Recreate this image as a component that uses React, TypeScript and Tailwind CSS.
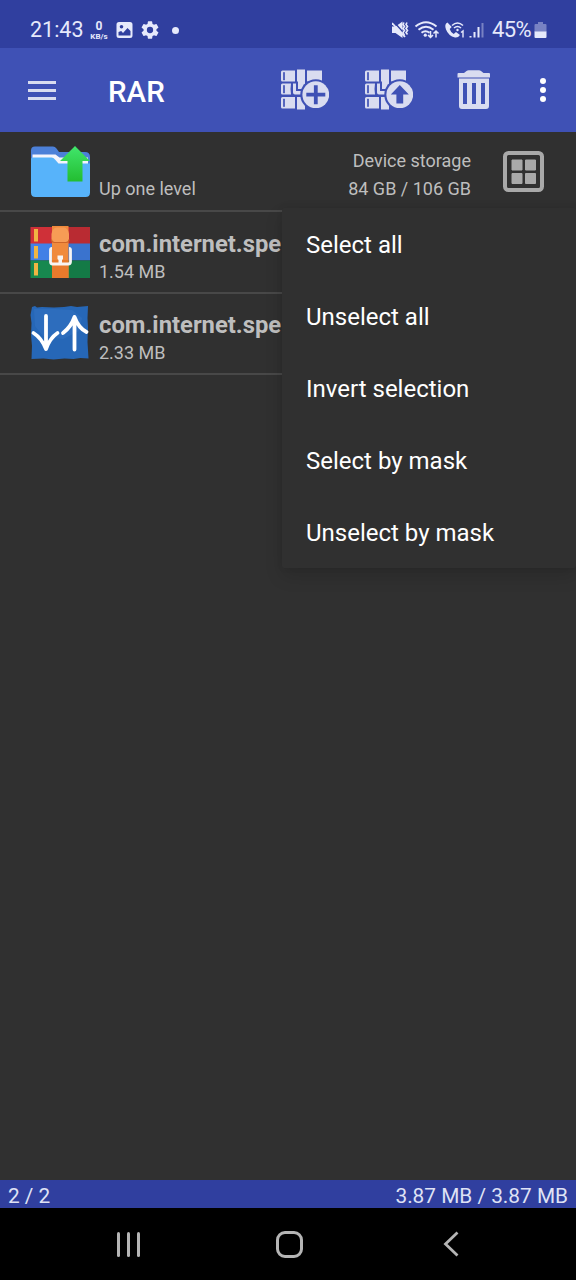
import type { ReactNode } from 'react'

const files = [
  { name: 'com.internet.spe', size: '1.54 MB', icon: <ArchiveIcon />, row: 'h-[82px]', iconTop: 'pt-[13px]', textTop: 'pt-[18px]' },
  { name: 'com.internet.spe', size: '2.33 MB', icon: <SpeedIcon />, row: 'h-[81px]', iconTop: 'pt-[11px]', textTop: 'pt-[17px]' },
]

const menuItems = ['Select all', 'Unselect all', 'Invert selection', 'Select by mask', 'Unselect by mask']

function ArchiveIcon() {
  return (
    <svg width="60" height="54" viewBox="0 0 60 54">
      <rect x="0.5" y="2" width="59.5" height="17" fill="#cf3038" />
      <rect x="0.5" y="18.500" width="59.5" height="17" fill="#4180e6" />
      <rect x="0.5" y="35.500" width="59.5" height="17.500" fill="#17884f" />
      <path d="M38.500 2H60v51H38.500z" fill="#000" opacity=".1" />
      <path d="M4 4h4v12.500H4zM4 21h4v12.500H4zM4 38h4v12.500H4z" fill="#f0b543" />
      <rect x="22" y="1" width="16.500" height="52" fill="#f08a3c" />
      <path d="M22 35h16.500v18H22z" fill="#e87a2c" />
      <path d="M21.500 9q1-6 5-6.500h7.500q4 .5 5 6.500v5q0 3-3 3H24.500q-3 0-3-3z" fill="#f79c55" />
      <path d="M21.500 14.500q0 3 3 3h11.500q3 0 3-3" fill="none" stroke="#cd6528" strokeWidth="1.200" />
      <path d="M22 23.300q-1.500 0-1.500 1.500v12q0 2.200 2.200 2.200h15.600q2.200 0 2.200-2.200v-12q0-1.500-1.500-1.500" fill="none" stroke="#f7f4f2" strokeWidth="2.800" />
      <path d="M27.500 30.500h5.500V34l-1 1v4h-3.500v-4l-1-1z" fill="#f7f4f2" />
    </svg>
  )
}

function SpeedIcon() {
  return (
    <svg width="60" height="56" viewBox="0 0 60 56">
      <path
        d="M2 2l3-1 2 1.500 5-.5 12 .5 10-.5 7-1 6 1 11-1-.5 12 .5 10-.5 14 1 16.500-8-.5-7 1-9-.5-11 1-10-1-12 .5.500-13-1-11 .5-12-1-8z"
        fill="#2667b7"
      />
      <path d="M4 4h20l18 1 10 8-3 13-16 8-20-3L5 21z" fill="#3977c5" opacity=".4" />
      <path d="M16 11v33M3.500 28q8 5 12.500 16 4-11 11.500-16M44.500 44.500V12M33 28q8-6 11.500-16 4 11 12 15" fill="none" stroke="#fff" strokeWidth="3.800" strokeLinecap="round" strokeLinejoin="round" />
    </svg>
  )
}

function FolderIcon() {
  return (
    <svg width="60" height="52" viewBox="0 0 60 52">
      <defs>
        <linearGradient id="up" x1="0" y1="0" x2="0" y2="1">
          <stop offset="0" stopColor="#41e66c" />
          <stop offset="1" stopColor="#23bd31" />
        </linearGradient>
      </defs>
      <path d="M5 .5h18q2 0 3.500 2l2.500 3.500H55q5 0 5 5v12H1V4.500q0-4 4-4z" fill="#4c80d8" />
      <path d="M2.500 8.500h23l4 3H58v8H2.500z" fill="#f4f4fb" />
      <path d="M1 13q0-1.500 2-1.500h18.500q2 0 3.500 2l3.500 4H60v29q0 4.500-4.500 4.500h-50Q1 51 1 46.500z" fill="#57b3fa" />
      <path d="M45 0l15 15h-7.500v20.500H37.500V15H30z" fill="url(#up)" />
    </svg>
  )
}

function BooksIcon({ children }: { children: ReactNode }) {
  return (
    <svg width="48" height="42" viewBox="0 0 48 42" fill="#d9dcf0">
      <path d="M1.500 1.500H14v11H1.500q-1.500 0-1.500-1.500V3q0-1.500 1.500-1.500zM16 .5h8V15.500h-7v-3h-1zM26 1.500h15v11H26zM1.500 14.500H10q-1 5.500 0 11H1.500Q0 25.500 0 24v-8q0-1.500 1.500-1.500zM12 14.500h3v7.500h7V25.500h-8q-2 0-2-2zM17 15h5.500v5H17zM1.500 28H14v11.500H1.500Q0 39.500 0 38v-8.500Q0 28 1.500 28zM16 28h8v12.500h-8z" />
      <path d="M2.500 3.500h1v7.500h-1zM2.500 16.500h1V24h-1zM2.500 30h1v7.500h-1z" fill="#3f51b5" stroke="#3f51b5" strokeWidth=".7" />
      <circle cx="34.800" cy="25.700" r="15.500" fill="#3f51b5" />
      <circle cx="34.800" cy="25.700" r="13.400" />
      {children}
    </svg>
  )
}

function TrashIcon() {
  return (
    <svg width="34" height="40" viewBox="0 0 34 40" fill="#d9dcf0">
      <path d="M7 3l2.500-2q1-.7 2-.7h10.500q1 0 2 .7L26.500 3H32q1 0 1 1v3.500H.5V4q0-1 1-1z" />
      <path fillRule="evenodd" d="M2 8.500h30V36q0 3-3 3H5q-3 0-3-3zM6 13v21h4V13zM15 13v21h4V13zM24 13v21h4V13z" />
    </svg>
  )
}

function StatusBar() {
  return (
    <div className="flex h-12 items-center bg-[#303f9f] pt-3 pl-[30px] text-[#e6e9fb]">
      <span className="w-[59px] text-[21.500px] leading-6">21:43</span>
      <div className="flex w-5 flex-col items-center font-bold">
        <span className="text-[12px] leading-[12px]">0</span>
        <span className="text-[8px] leading-[9px]">KB/s</span>
      </div>
      <svg className="ml-[7px]" width="17" height="18" viewBox="0 0 17 18">
        <path fill="currentColor" fillRule="evenodd" d="M3 1h11q2.500 0 2.500 2.500v11Q16.500 17 14 17H3Q.5 17 .5 14.500v-11Q.5 1 3 1zM5.500 4a1.800 1.800 0 1 0 0 3.600 1.800 1.800 0 0 0 0-3.600zM2.500 11v3.500h12V10l-3-3-4.500 5-1.800-2z" />
      </svg>
      <svg className="ml-2" width="18" height="18" viewBox="2 2 20 20" fill="currentColor">
        <path d="M19.140 12.940a7 7 0 0 0 0-1.880l2.030-1.580a.5.5 0 0 0 .12-.61l-1.920-3.320a.5.5 0 0 0-.59-.22l-2.390.96a7 7 0 0 0-1.620-.94l-.36-2.540a.5.5 0 0 0-.48-.41h-3.840a.5.5 0 0 0-.47.41l-.36 2.540a7 7 0 0 0-1.620.94l-2.390-.96a.5.5 0 0 0-.59.22L2.740 8.870a.5.5 0 0 0 .12.610l2.030 1.580a7 7 0 0 0 0 1.880l-2.030 1.580a.5.5 0 0 0-.12.610l1.920 3.320c.12.220.370.290.590.220l2.390-.96c.5.380 1.030.7 1.620.940l.36 2.540c.05.240.240.410.480.410h3.840c.240 0 .440-.170.470-.410l.36-2.540a7 7 0 0 0 1.620-.940l2.390.960c.220.080.470 0 .590-.220l1.920-3.320a.5.5 0 0 0-.12-.61zM12 15.500a3.500 3.500 0 1 1 0-7 3.500 3.500 0 0 1 0 7z" />
      </svg>
      <span className="ml-[13px] size-[7px] rounded-full bg-[#e6e9fb]" />
      <div className="ml-auto flex items-center pr-[29px]">
        <svg width="93" height="20" viewBox="0 0 93 20" fill="none" stroke="currentColor">
          {/* muted, vibrate */}
          <path d="M0 6.500h3.500L10.500 1.500v16.500l-7-5H0z" fill="currentColor" stroke="none" />
          <path d="M2 2l12 13.500" stroke="#303f9f" strokeWidth="1.300" />
          <path d="M0 3l13 14" strokeWidth="1.800" />
          <path d="M12 2.500l-1 2 1.500 2-1.500 2 1.500 2-1.500 2 1.500 3M15 2.500l-1 2 1.500 2-1.500 2 1.500 2-1.500 2 1.500 2" strokeWidth="1.600" />
          {/* wifi */}
          <path d="M23.500 6.500q10.500-8.500 21 0M26.500 9.800q7.500-6 15 0M29.500 12.800q4-3 8 0" strokeWidth="2" />
          <circle cx="33.300" cy="15.200" r="1.600" fill="currentColor" stroke="none" />
          <path d="M38.500 11v6.500m-2.500-2.500l2.500 2.500 2.500-2.500M44 17.500V11m-2.500 2.500 2.500-2.500 2.500 2.500" strokeWidth="1.500" />
          {/* wifi calling */}
          <path d="M55.500 2.500q-3.500 1.500-1.500 7 2.500 6.500 9 8 3 .5 5-2.500l-4-3-2.300 2q-3-1.500-4-5l2-2z" fill="currentColor" stroke="none" />
          <path d="M60 5.500q5.500-5 11 0M62 8q3.500-3 7 0" strokeWidth="1.600" />
          <circle cx="65.500" cy="10" r="1.200" fill="currentColor" stroke="none" />
          <path d="M69 12.500l2-1.500v6.500" strokeWidth="1.400" />
          {/* signal */}
          <path d="M78.500 16v1.500M82.500 12v5.500M86.500 7v10.500" strokeWidth="2" />
          <path d="M90.500 3v14.500" strokeWidth="2" opacity=".4" />
        </svg>
        <span className="ml-[7px] text-[22px] leading-6 tracking-[-0.6px]">45%</span>
        <svg className="ml-[3px]" width="13" height="18" viewBox="0 0 13 18" fill="currentColor">
          <path d="M4 1h5v2h2.500q1 0 1 1v7H.5V4q0-1 1-1H4z" opacity=".4" />
          <path d="M.5 10.500h12V16q0 1-1 1h-10q-1 0-1-1z" />
        </svg>
      </div>
    </div>
  )
}

function AppBar() {
  return (
    <div className="flex h-[84px] items-center bg-[#3f51b5] pl-7">
      <div className="flex w-20 flex-col gap-[5px]">
        <span className="h-[3px] w-7 bg-[#d9dcf0]" />
        <span className="h-[3px] w-7 bg-[#d9dcf0]" />
        <span className="h-[3px] w-7 bg-[#d9dcf0]" />
      </div>
      <h1 className="w-[173px] pt-1 text-[29.500px] font-medium text-white">RAR</h1>
      <BooksIcon>
        <path d="M34.800 16.200v19M25.300 25.700h19" stroke="#3f51b5" strokeWidth="3.800" />
      </BooksIcon>
      <div className="ml-9">
        <BooksIcon>
          <path d="M34.800 16l9 9.500h-5.600v9h-6.800v-9h-5.600z" fill="#3f51b5" />
        </BooksIcon>
      </div>
      <div className="ml-11">
        <TrashIcon />
      </div>
      <div className="ml-[49px] flex flex-col gap-[3px]">
        <span className="size-1.5 rounded-full bg-white" />
        <span className="size-1.5 rounded-full bg-white" />
        <span className="size-1.5 rounded-full bg-white" />
      </div>
    </div>
  )
}

function OverflowMenu() {
  return (
    <div className="absolute top-[208px] left-[282px] h-[360px] w-[294px] rounded-[2px] bg-[#303030] shadow-[0_8px_18px_rgba(0,0,0,0.14),0_0_6px_rgba(0,0,0,0.08)]">
      {menuItems.map((item) => (
        <div key={item} className="flex h-[72px] items-center pt-0.5 pl-6 text-[24px] text-white">
          {item}
        </div>
      ))}
    </div>
  )
}

export default function App() {
  return (
    <div className="relative flex h-[1280px] w-[576px] flex-col overflow-hidden bg-[#303030] font-['Roboto',sans-serif]">
      <StatusBar />
      <AppBar />

      <div className="grow text-[#bebebe]">
        <div className="flex h-20 items-start border-b-2 border-[#484848] pl-[30px]">
          <div className="pt-3.5">
            <FolderIcon />
          </div>
          <span className="ml-[9px] pt-[43px] text-[18px] leading-7">Up one level</span>
          <div className="ml-auto pt-[15px] text-right text-[18px] leading-7">
            <p>Device storage</p>
            <p>84 GB / 106 GB</p>
          </div>
          <svg className="mt-[19px] mr-8 ml-8" width="41" height="41" viewBox="0 0 41 41" fill="#a9a9a9">
            <rect x="2" y="2" width="37" height="37" rx="3.500" fill="none" stroke="#a9a9a9" strokeWidth="4" />
            <path d="M9 9h10v10H9zM22.500 9h10v10h-10zM9 22.500h10v10H9zM22.500 22.500h10v10h-10z" stroke="#a9a9a9" strokeWidth="1" strokeLinejoin="round" />
          </svg>
        </div>

        {files.map((file) => (
          <div key={file.size} className={`flex items-start border-b-2 border-[#484848] pl-[30px] ${file.row}`}>
            <div className={file.iconTop}>{file.icon}</div>
            <div className={`ml-[9px] ${file.textTop}`}>
              <p className="text-[23.800px] leading-7 font-bold">{file.name}</p>
              <p className="text-[18px] leading-7">{file.size}</p>
            </div>
          </div>
        ))}
      </div>

      <div className="flex h-7 items-center justify-between bg-[#303f9f] px-2 pt-1 text-[20.800px] leading-6 text-[#dfe2f5]">
        <span>2 / 2</span>
        <span>3.87 MB / 3.87 MB</span>
      </div>

      <div className="flex h-[72px] items-center bg-black pl-[117px]">
        <div className="flex gap-[7px]">
          <span className="h-[25px] w-[3px] rounded-full bg-[#b5b5b5]" />
          <span className="h-[25px] w-[3px] rounded-full bg-[#b5b5b5]" />
          <span className="h-[25px] w-[3px] rounded-full bg-[#b5b5b5]" />
        </div>
        <span className="ml-[136px] size-[27px] rounded-[9px] border-3 border-[#b5b5b5]" />
        <svg className="ml-[140px]" width="16" height="28" viewBox="0 0 16 28">
          <path d="M14.500 2.500L2.500 14l12 11.500" fill="none" stroke="#b5b5b5" strokeWidth="2.800" />
        </svg>
      </div>

      <OverflowMenu />
    </div>
  )
}
